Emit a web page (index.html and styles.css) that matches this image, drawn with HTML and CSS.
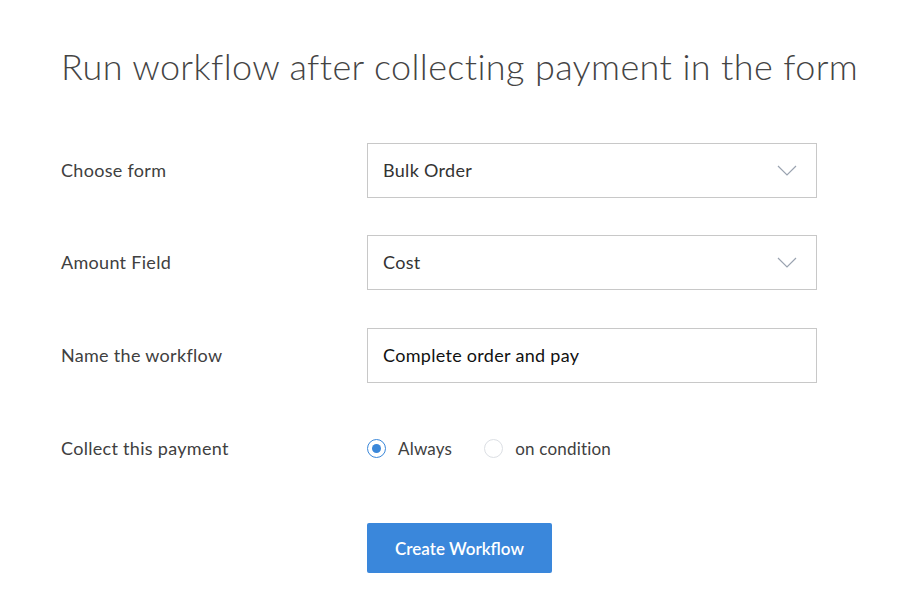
FILE: index.html
```html
<!DOCTYPE html>
<html>
<head>
<meta charset="utf-8">
<link rel="stylesheet" href="styles.css">
</head>
<body>
<main class="page">
  <h1 class="title">Run workflow after collecting payment in the form</h1>
  <div class="form">
    <div class="row">
      <label class="label">Choose form</label>
      <div class="field select"><span>Bulk Order</span>
        <svg class="chev" width="20" height="11" viewBox="0 0 20 11"><path d="M1 1 L10 10 L19 1" fill="none" stroke="#9aa3b0" stroke-width="1.2"/></svg>
      </div>
    </div>
    <div class="row">
      <label class="label">Amount Field</label>
      <div class="field select"><span>Cost</span>
        <svg class="chev" width="20" height="11" viewBox="0 0 20 11"><path d="M1 1 L10 10 L19 1" fill="none" stroke="#9aa3b0" stroke-width="1.2"/></svg>
      </div>
    </div>
    <div class="row row-name">
      <label class="label">Name the workflow</label>
      <div class="field text"><span>Complete order and pay</span></div>
    </div>
    <div class="row radio-row">
      <label class="label">Collect this payment</label>
      <div class="radios">
        <span class="radio checked"></span><span class="rlabel">Always</span>
        <span class="radio"></span><span class="rlabel">on condition</span>
      </div>
    </div>
    <div class="actions">
      <button class="btn">Create Workflow</button>
    </div>
  </div>
</main>
</body>
</html>
```
FILE: styles.css
```css
html, body { margin: 0; padding: 0; background: #fff; }
body { font-family: Lato, "Open Sans", sans-serif; color: #3d3d3d; }
.page { padding: 44px 0 0 61px; width: 862px; }
.title { margin: 0; font-weight: 300; font-size: 36px; line-height: 44px; color: #444; letter-spacing: 0.38px; white-space: nowrap; }
.form { margin-top: 55px; display: flex; flex-direction: column; }
.row { display: flex; align-items: center; height: 54px; margin-bottom: 38px; }
.row-name { margin-top: 1px; margin-bottom: 37px; }
.label { width: 306px; font-size: 18px; letter-spacing: 0.3px; color: #404040; }
.field { box-sizing: border-box; width: 450px; height: 55px; border: 1px solid #c8c8c8; display: flex; align-items: center; padding: 0 15px; font-size: 18px; letter-spacing: 0.3px; color: #333; }
.select { justify-content: space-between; }
.chev { margin-right: 4px; }
.text span { color: #111; }
.radio-row { height: 54px; margin-top: 2px; }
.radios { display: flex; align-items: center; font-size: 17px; letter-spacing: 0.2px; color: #404040; }
.radio { box-sizing: border-box; width: 19px; height: 19px; border-radius: 50%; border: 1px solid #dcdfe4; position: relative; }
.radio.checked { border-color: #3a87d9; }
.radio.checked::after { content: ""; position: absolute; left: 4px; top: 4px; width: 9px; height: 9px; border-radius: 50%; background: #3a87d9; }
.rlabel { margin-left: 12px; margin-right: 32px; }
.actions { padding-left: 306px; margin-top: 10px; }
.btn { width: 185px; height: 50px; border: none; border-radius: 2px; background: #3a87db; color: #fff; font-family: Lato, sans-serif; font-size: 17px; font-weight: 600; padding: 0; }
```
